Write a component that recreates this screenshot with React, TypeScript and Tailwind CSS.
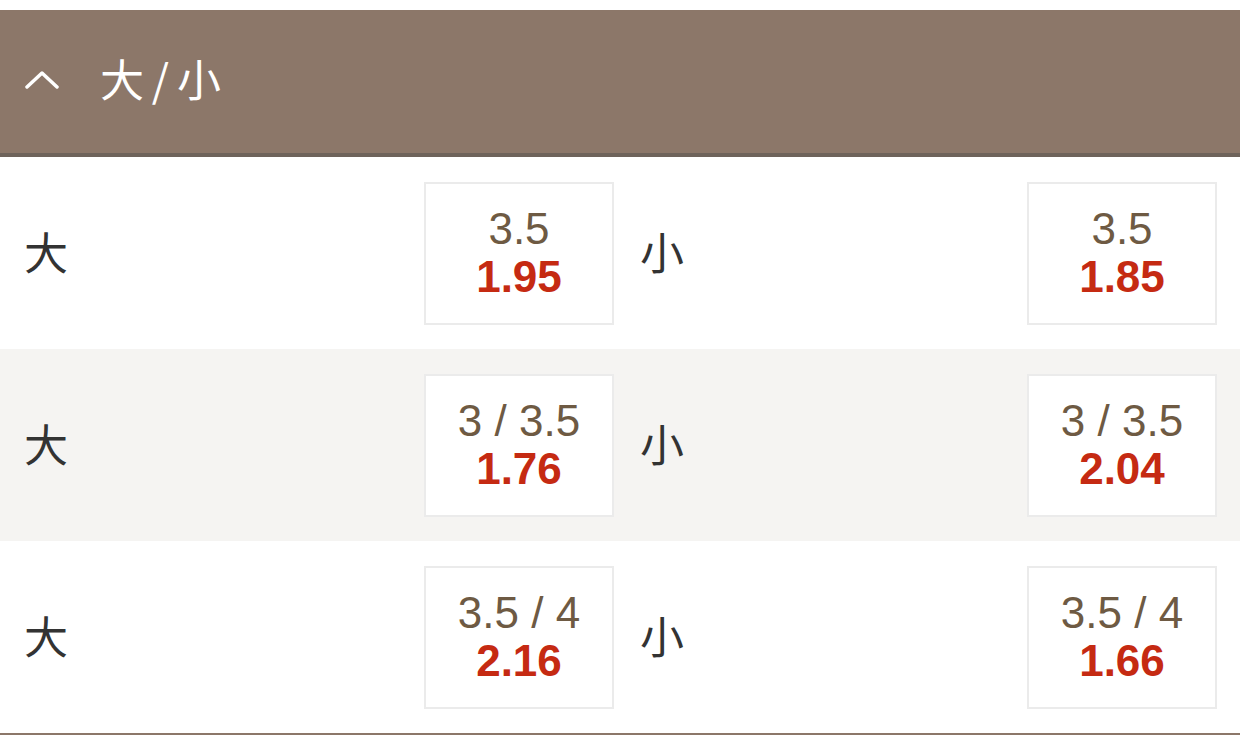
import React from 'react';

const rows = [
  { over: { line: '3.5', odds: '1.95' }, under: { line: '3.5', odds: '1.85' } },
  { over: { line: '3 / 3.5', odds: '1.76' }, under: { line: '3 / 3.5', odds: '2.04' } },
  { over: { line: '3.5 / 4', odds: '2.16' }, under: { line: '3.5 / 4', odds: '1.66' } },
];

const cjk = { fontFamily: '"Noto Sans CJK SC", "Noto Sans", sans-serif' };
const num = { fontFamily: '"Liberation Sans", Arial, sans-serif' };

const OddsBox: React.FC<{ line: string; odds: string }> = ({ line, odds }) => (
  <div className="w-[190px] h-[143px] border-2 border-[#ebebeb] bg-white flex flex-col items-center justify-center" style={num}>
    <span className="text-[44px] leading-[48px] text-[#6e5a43]">{line}</span>
    <span className="text-[44px] leading-[48px] font-bold text-[#c52a12]">{odds}</span>
  </div>
);

export default function App() {
  return (
    <div className="w-full h-[735px] bg-white pt-[10px] overflow-hidden">
      <div className="h-[147px] bg-[#8c7769] border-b-4 border-[#6e635b] flex items-center">
        <svg className="ml-[25px] -mt-[4px]" width="34" height="20" viewBox="0 0 34 20" fill="none">
          <path d="M2 17 L17 3 L32 17" stroke="white" strokeWidth="3.5" strokeLinecap="round" strokeLinejoin="round" />
        </svg>
        <span className="ml-[41px] -mt-[8px] text-[44px] text-white tracking-[-1px]" style={cjk}>大 / 小</span>
      </div>
      {rows.map((r, i) => (
        <div key={i} className={`h-[192px] grid grid-cols-2 ${i === 1 ? 'bg-[#f5f4f2]' : 'bg-white'}`}>
          <div className="flex items-center justify-between pl-6 pr-[6px]">
            <span className="text-[44px] text-[#333333] -mt-[4px]" style={cjk}>大</span>
            <OddsBox {...r.over} />
          </div>
          <div className="flex items-center justify-between pl-5 pr-[23px]">
            <span className="text-[44px] text-[#333333] -mt-[4px]" style={cjk}>小</span>
            <OddsBox {...r.under} />
          </div>
        </div>
      ))}
      <div className="h-[2px] bg-[#8c7769]" />
    </div>
  );
}
